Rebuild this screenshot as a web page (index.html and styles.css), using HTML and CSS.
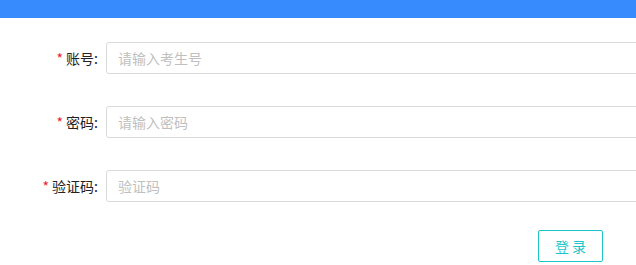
FILE: index.html
```html
<!DOCTYPE html>
<html lang="zh">
<head>
  <meta charset="UTF-8" />
  <title>登录</title>
  <link rel="stylesheet" href="styles.css">
</head>
<body>
  <div class="topbar"></div>
  <div class="form">
    <div class="row">
      <label for="account"><span class="req">*</span> 账号:</label>
      <input type="text" id="account" placeholder="请输入考生号">
    </div>
    <div class="row">
      <label for="pwd"><span class="req">*</span> 密码:</label>
      <input type="password" id="pwd" placeholder="请输入密码">
    </div>
    <div class="row last">
      <label for="code"><span class="req">*</span> 验证码:</label>
      <input type="text" id="code" placeholder="验证码">
    </div>
    <div class="actions">
      <button class="login-btn">登 录</button>
    </div>
  </div>
</body>
</html>
```

FILE: styles.css
```css
body {
  margin: 0;
  overflow: hidden;
  font-family: "Noto Sans CJK SC", "Noto Sans", sans-serif;
  font-size: 14px;
  color: #222;
  background-color: white;
}
.topbar {
  height: 18px;
  background-color: #388bfd;
}
.form {
  padding-top: 24px;
  overflow: hidden;
}
.row {
  display: flex;
  align-items: center;
  height: 32px;
  margin-bottom: 32px;
}
.row.last {
  margin-bottom: 0;
}
label {
  flex: 0 0 106px;
  box-sizing: border-box;
  padding-right: 8px;
  text-align: right;
  white-space: nowrap;
}
.req {
  color: #f0202a;
}
input {
  flex: 0 0 620px;
  box-sizing: border-box;
  height: 32px;
  padding: 0 11px;
  border: 1px solid #d9d9d9;
  border-radius: 3px;
  font-family: inherit;
  font-size: 14px;
  color: #333;
  outline: none;
}
input::placeholder {
  color: #bfbfbf;
}
.actions {
  display: flex;
  padding-top: 28px;
  padding-left: 538px;
}
.login-btn {
  box-sizing: border-box;
  width: 65px;
  height: 32px;
  border: 1px solid #19c5c8;
  border-radius: 2px;
  background-color: white;
  color: #19c5c8;
  font-family: inherit;
  font-size: 14px;
  cursor: pointer;
}
```
